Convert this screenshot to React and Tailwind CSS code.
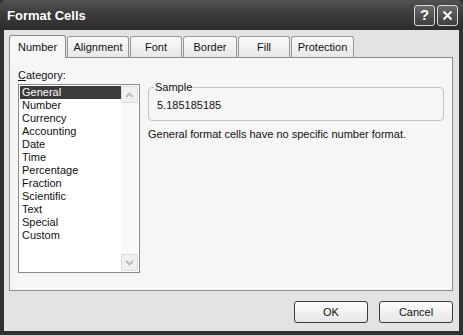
import React from 'react';

const tabs = [
  { label: 'Number', w: 'w-[57px]', active: true },
  { label: 'Alignment', w: 'w-[62px]' },
  { label: 'Font', w: 'w-[52px]' },
  { label: 'Border', w: 'w-[54px]' },
  { label: 'Fill', w: 'w-[52px]' },
  { label: 'Protection', w: 'w-[63px]' },
];

const categories = [
  'General', 'Number', 'Currency', 'Accounting', 'Date', 'Time',
  'Percentage', 'Fraction', 'Scientific', 'Text', 'Special', 'Custom',
];

const Chevron = ({ up }) => (
  <svg width="9" height="6" viewBox="0 0 9 6">
    <path
      d={up ? 'M1 5 L4.5 1.5 L8 5' : 'M1 1 L4.5 4.5 L8 1'}
      fill="none"
      stroke="#bdbdbd"
      strokeWidth="2"
    />
  </svg>
);

const FormatCells = () => {
  return (
    <div
      className="w-[463px] h-[335px] bg-[#303030] flex flex-col overflow-hidden text-[11px] text-[#111]"
      style={{ fontFamily: '"Liberation Sans", Arial, sans-serif' }}
    >
      {/* Title bar */}
      <div className="h-[30px] shrink-0 flex items-center pl-[7px] pr-[5px] bg-gradient-to-b from-[#525252] via-[#3a3a3a] to-[#2c2c2c] rounded-t-[6px]">
        <span className="text-white font-bold text-[13px] flex-1 pt-[1px]">Format Cells</span>
        <div className="flex gap-[2px]">
          <div className="w-[21px] h-[21px] rounded-[3px] border border-[#d8d8d8] bg-gradient-to-b from-[#6a6a6a] to-[#3e3e3e] flex items-center justify-center text-white font-bold text-[15px]">?</div>
          <div className="w-[21px] h-[21px] rounded-[3px] border border-[#d8d8d8] bg-gradient-to-b from-[#6a6a6a] to-[#3e3e3e] flex items-center justify-center">
            <svg width="11" height="11" viewBox="0 0 11 11">
              <path d="M1.5 1.5 L9.5 9.5 M9.5 1.5 L1.5 9.5" stroke="white" strokeWidth="2" />
            </svg>
          </div>
        </div>
      </div>

      {/* Client area */}
      <div className="flex-1 mx-[4px] mb-[4px] bg-[#e3e3e3] flex flex-col pl-[5px] pr-[6px] pt-[5px]">
        {/* Tabs */}
        <div className="flex items-end h-[23px] gap-[1px] relative z-10">
          {tabs.map((t) =>
            t.active ? (
              <div
                key={t.label}
                className={`${t.w} h-[23px] bg-[#f7f7f7] border border-b-0 border-[#8c8c8c] rounded-t-[3px] flex items-start justify-center pt-[3px]`}
              >
                {t.label}
              </div>
            ) : (
              <div
                key={t.label}
                className={`${t.w} h-[21px] mb-[1px] bg-gradient-to-b from-[#fafafa] to-[#e8e8e8] border border-b-0 border-[#999] rounded-t-[3px] flex items-center justify-center pt-[1px]`}
              >
                {t.label}
              </div>
            )
          )}
        </div>

        {/* Panel */}
        <div className="h-[234px] -mt-[1px] bg-[#f6f6f6] border border-[#8c8c8c] flex pl-[8px] pt-[9px]">
          <div className="flex flex-col w-[122px]">
            <div className="h-[17px] leading-[17px]">
              <span className="underline">C</span>ategory:
            </div>
            <div className="h-[189px] bg-white border border-[#8a8a8a] flex p-[1px]">
              <div className="flex-1 flex flex-col">
                {categories.map((c, i) => (
                  <div
                    key={c}
                    className={`h-[13px] leading-[13px] pl-[2px] ${i === 0 ? 'bg-[#3b3b3b] text-white' : ''}`}
                  >
                    {c}
                  </div>
                ))}
              </div>
              <div className="w-[17px] flex flex-col justify-between bg-[#f9f9f9]">
                <div className="h-[17px] border border-[#dcdcdc] rounded-[2px] bg-[#f0f0f0] flex items-center justify-center">
                  <Chevron up />
                </div>
                <div className="h-[17px] border border-[#dcdcdc] rounded-[2px] bg-[#f0f0f0] flex items-center justify-center">
                  <Chevron />
                </div>
              </div>
            </div>
          </div>

          <div className="flex flex-col ml-[8px] w-[296px] pt-[20px]">
            <div className="relative h-[34px] border border-[#c4c4c4] rounded-[4px] flex items-center pl-[8px] pt-[3px]">
              <span className="absolute -top-[7px] left-[5px] bg-[#f6f6f6] px-[1px] leading-[12px]">Sample</span>
              5.185185185
            </div>
            <div className="mt-[5px]">General format cells have no specific number format.</div>
          </div>
        </div>

        {/* Buttons */}
        <div className="flex justify-end gap-[11px] mt-[10px]">
          <button className="w-[74px] h-[22px] rounded-[3px] border border-[#3a3a3a] bg-gradient-to-b from-[#fdfdfd] to-[#e6e6e6] text-[11px]">
            OK
          </button>
          <button className="w-[74px] h-[22px] rounded-[3px] border border-[#3a3a3a] bg-gradient-to-b from-[#fdfdfd] to-[#e6e6e6] text-[11px]">
            Cancel
          </button>
        </div>
      </div>
    </div>
  );
};

export default FormatCells;
